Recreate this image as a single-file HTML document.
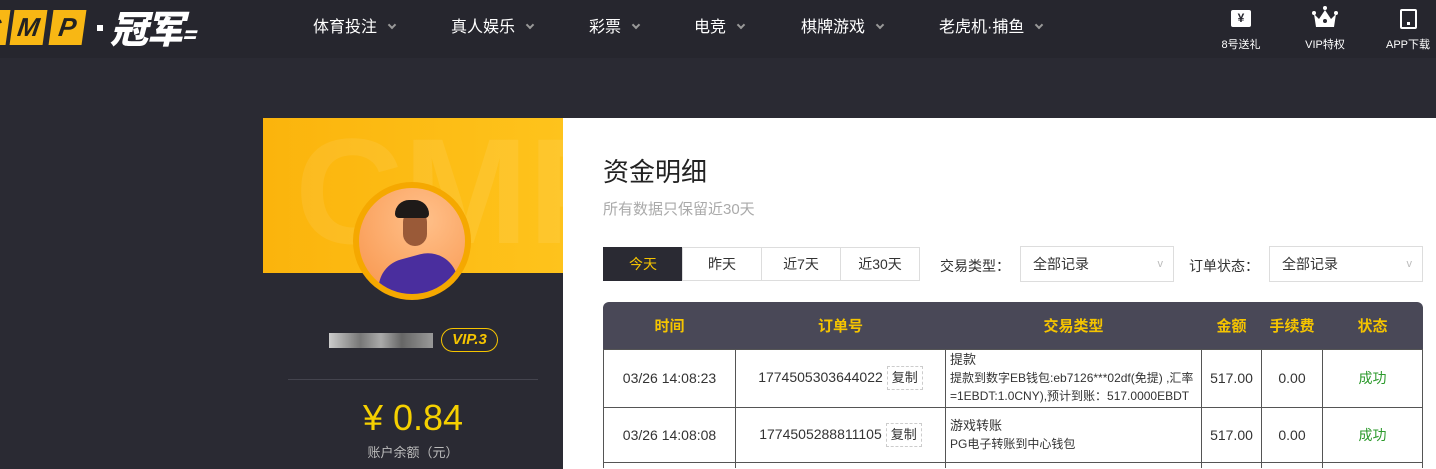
<!DOCTYPE html>
<html><head><meta charset="utf-8"><style>
*{margin:0;padding:0;box-sizing:border-box}
html,body{width:1436px;height:469px;overflow:hidden}
body{background:#2a2a33;font-family:"Liberation Sans","Noto Sans CJK SC",sans-serif;position:relative}
.hdr{position:absolute;left:0;top:0;width:1436px;height:58px;background:#26262e}
.a{position:absolute}
.nav{position:absolute;top:18px;color:#fff;font-size:16px;line-height:20px}
.nav i{display:inline-block;width:6px;height:6px;border-right:2px solid #999;border-bottom:2px solid #999;transform:rotate(45deg);margin-left:12px;position:relative;top:-4px}
.ic{position:absolute;top:36px;color:#fff;font-size:11px;text-align:center;width:70px}
.box{position:absolute;top:10px;width:33px;height:35px;background:#f8b714;color:#222;font:italic 900 26px/35px "Liberation Sans";text-align:center;transform:skewX(-8deg)}
.panel{position:absolute;left:563px;top:118px;width:873px;height:351px;background:#fff;overflow:hidden}
.tab{position:absolute;top:247px;height:34px;border:1px solid #ddd;font-size:14px;line-height:32px;text-align:center;color:#333;background:#fff}
.sel{position:absolute;top:246px;height:36px;border:1px solid #ddd;font-size:14px;line-height:34px;padding-left:12px;color:#333}
.sel:after{content:"v";position:absolute;right:10px;color:#bbb;font-size:11px}
table{position:absolute;left:40px;top:184px;width:820px;border-collapse:collapse;font-size:14px;color:#333}
th{color:#f5c400;height:47px;font-size:15px;font-weight:bold}
td{border:1px solid #555;text-align:center}
td.l{text-align:left;padding-left:4px;font-size:12px;line-height:18px}
.cp{display:inline-block;border:1px dashed #ccc;padding:0 4px;font-size:13px;margin-left:4px;line-height:22px}
</style></head><body>
<div class="hdr"></div>
<div class="box" style="left:-25px">C</div><div class="box" style="left:12px">M</div><div class="box" style="left:51px">P</div>
<div class="a" style="left:97px;top:25px;width:6px;height:6px;background:#fff"></div>
<div class="a" style="left:110px;top:5px;color:#fff;font:italic 900 38px/44px 'Noto Sans CJK SC',sans-serif;letter-spacing:-2px">冠军<span style="font-size:22px">=</span></div>
<div class="nav" style="left:313px">体育投注<i></i></div>
<div class="nav" style="left:451px">真人娱乐<i></i></div>
<div class="nav" style="left:589px">彩票<i></i></div>
<div class="nav" style="left:694px">电竞<i></i></div>
<div class="nav" style="left:801px">棋牌游戏<i></i></div>
<div class="nav" style="left:939px">老虎机·捕鱼<i></i></div>
<div class="a" style="left:1231px;top:10px;width:20px;height:17px;background:#fff;border-radius:2px;color:#26262e;font:bold 12px/17px sans-serif;text-align:center">¥</div>
<div class="ic" style="left:1206px">8号送礼</div>
<svg class="a" style="left:1312px;top:6px" width="26" height="22" viewBox="0 0 26 22"><circle cx="13" cy="2" r="2" fill="#fff"/><circle cx="2" cy="7" r="2" fill="#fff"/><circle cx="24" cy="7" r="2" fill="#fff"/><path d="M2 8 L7 13 L13 4 L19 13 L24 8 L22 21 L4 21Z" fill="#fff"/><circle cx="13" cy="15" r="2" fill="#26262e"/></svg>
<div class="ic" style="left:1290px">VIP特权</div>
<div class="a" style="left:1400px;top:9px;width:17px;height:20px;border:2.5px solid #fff;border-radius:2px"></div><div class="a" style="left:1407px;top:22px;width:3px;height:3px;background:#fff"></div>
<div class="ic" style="left:1373px">APP下载</div>

<div class="a" style="left:263px;top:118px;width:300px;height:155px;background:linear-gradient(90deg,#fbb40c,#fec31c);overflow:hidden"><div class="a" style="left:32px;top:-12px;color:rgba(255,255,255,.08);font:bold 150px/170px 'Liberation Sans'">CMP</div></div>
<div class="a" style="left:353px;top:182px;width:118px;height:118px;border-radius:50%;background:#f5a800"></div>
<div class="a" style="left:359px;top:188px;width:106px;height:106px;border-radius:50%;background:radial-gradient(circle at 60% 30%,#ffc08a,#f8944a);overflow:hidden"><div class="a" style="left:18px;top:68px;width:80px;height:50px;background:#4a2e9e;border-radius:30px 30px 0 0;transform:rotate(-15deg)"></div><div class="a" style="left:44px;top:22px;width:24px;height:36px;background:#9a5a38;border-radius:12px"></div><div class="a" style="left:36px;top:12px;width:34px;height:18px;background:#1e1a18;border-radius:14px 14px 4px 4px"></div></div>
<div class="a" style="left:329px;top:333px;width:104px;height:15px;background:linear-gradient(90deg,#ccc,#777 30%,#aaa 50%,#666 70%,#999)"></div>
<div class="a" style="left:441px;top:328px;width:57px;height:24px;border:1.5px solid #f5c400;border-radius:12px;color:#f5c400;font:italic bold 15px/21px 'Liberation Sans';text-align:center">VIP.3</div>
<div class="a" style="left:288px;top:379px;width:250px;height:1px;background:#44444e"></div>
<div class="a" style="left:263px;top:394px;width:300px;text-align:center;color:#f5d000;font-size:36px;line-height:48px">¥ 0.84</div>
<div class="a" style="left:263px;top:444px;width:300px;text-align:center;color:#bbb;font-size:13px;line-height:18px">账户余额（元）</div>

<div class="panel">
<div class="a" style="left:40px;top:34px;font-size:26px;color:#222">资金明细</div>
<div class="a" style="left:40px;top:80px;font-size:15px;color:#aaa">所有数据只保留近30天</div>
<div class="tab" style="left:40px;top:129px;width:80px;background:#2a2a33;color:#f5c400;border-color:#2a2a33">今天</div>
<div class="tab" style="left:119px;top:129px;width:80px">昨天</div>
<div class="tab" style="left:198px;top:129px;width:80px">近7天</div>
<div class="tab" style="left:277px;top:129px;width:80px">近30天</div>
<div class="a" style="left:377px;top:138px;font-size:14px;color:#333">交易类型：</div>
<div class="sel" style="left:457px;top:128px;width:154px">全部记录</div>
<div class="a" style="left:626px;top:138px;font-size:14px;color:#333">订单状态：</div>
<div class="sel" style="left:706px;top:128px;width:154px">全部记录</div>
<div class="a" style="left:40px;top:184px;width:820px;height:47px;background:#494857;border-radius:6px 6px 0 0"></div>
<table>
<tr><th style="width:132px">时间</th><th style="width:210px">订单号</th><th style="width:256px">交易类型</th><th style="width:60px">金额</th><th style="width:61px">手续费</th><th>状态</th></tr>
<tr style="height:58px"><td>03/26 14:08:23</td><td>1774505303644022<span class="cp">复制</span></td><td class="l"><span style="font-size:13px">提款</span><br>提款到数字EB钱包:eb7126***02df(免提) ,汇率=1EBDT:1.0CNY),预计到账：517.0000EBDT</td><td>517.00</td><td>0.00</td><td style="color:#2c9a2c">成功</td></tr>
<tr style="height:55px"><td>03/26 14:08:08</td><td>1774505288811105<span class="cp">复制</span></td><td class="l"><span style="font-size:13px">游戏转账</span><br>PG电子转账到中心钱包</td><td>517.00</td><td>0.00</td><td style="color:#2c9a2c">成功</td></tr>
<tr style="height:6px"><td style="border-bottom:0"></td><td style="border-bottom:0"></td><td style="border-bottom:0"></td><td style="border-bottom:0"></td><td style="border-bottom:0"></td><td style="border-bottom:0"></td></tr>
</table>
</div>
</body></html>
